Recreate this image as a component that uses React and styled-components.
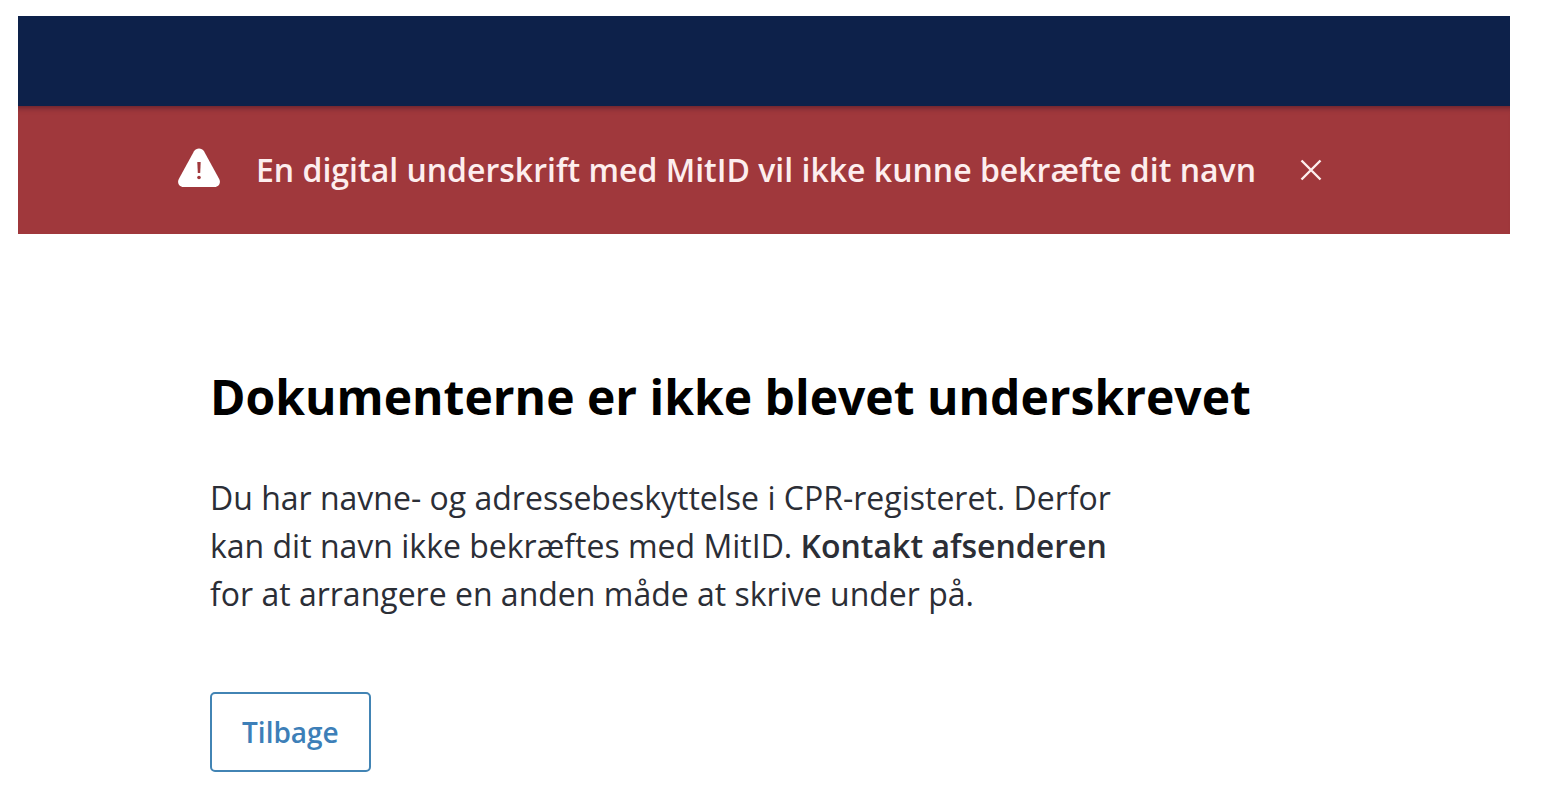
import React from "react";
import styled, { createGlobalStyle } from "styled-components";

const GlobalStyle = createGlobalStyle`
  *, *::before, *::after { box-sizing: border-box; }
  body {
    margin: 0;
    background: #fff;
    color: #2b2e36;
    font-family: "Open Sans", "Noto Sans", sans-serif;
  }
`;

const Page = styled.div`
  padding: 16px 50px 32px 18px;
`;

const TopBar = styled.header`
  height: 90px;
  background: #0d214a;
`;

const Alert = styled.div`
  display: flex;
  align-items: center;
  min-height: 128px;
  padding: 0 160px;
  background: #a0383c;
  color: #fff;
  box-shadow: inset 0 7px 6px -6px rgba(40, 10, 30, 0.6);
`;

const WarningIcon = styled.svg`
  flex: none;
  width: 42px;
  height: 40px;
  margin: 0 36px 4px 0;
`;

const AlertText = styled.p`
  margin: 0;
  font-size: 32px;
  line-height: 48px;
  font-weight: 600;
  color: #fdeeee;
`;

const CloseButton = styled.button`
  display: flex;
  margin: 0 0 0 40px;
  padding: 4px;
  border: 0;
  background: none;
  color: #fdeeee;
  cursor: pointer;
`;

const Content = styled.main`
  padding: 128px 192px 0;
`;

const Title = styled.h1`
  margin: 0;
  color: #000;
  font-size: 48px;
  line-height: 70px;
  font-weight: 700;
`;

const Message = styled.p`
  max-width: 920px;
  margin: 42px 0 74px;
  font-size: 32px;
  line-height: 48px;

  strong { font-weight: 600; }
`;

const BackButton = styled.button`
  height: 80px;
  padding: 0 30px;
  border: 2px solid #4284b4;
  border-radius: 5px;
  background: #fff;
  color: #3d7fb8;
  font: 600 28px/40px "Open Sans", sans-serif;
  cursor: pointer;
`;

export default function App() {
  return (
    <Page>
      <GlobalStyle />
      <TopBar />
      <Alert role="alert">
        <WarningIcon viewBox="0 0 42 40" aria-hidden="true">
          <path
            fill="#fff"
            d="M16 3.2C18.2-.3 23.8-.3 26 3.2L41.2 31C43.2 34.700 40.800 39 36.600 39H5.400C1.200 39-1.200 34.700.8 31Z"
          />
          <path fill="#a0383c" d="M19.300 14h3.400l-.5 11h-2.400Z" />
          <circle cx="21" cy="29.500" r="1.800" fill="#a0383c" />
        </WarningIcon>
        <AlertText>En digital underskrift med MitID vil ikke kunne bekræfte dit navn</AlertText>
        <CloseButton type="button" aria-label="Luk">
          <svg width="22" height="22" viewBox="0 0 22 22" aria-hidden="true">
            <path d="M1.500 1.500l19 19M20.500 1.500l-19 19" stroke="currentColor" strokeWidth="2.400" />
          </svg>
        </CloseButton>
      </Alert>
      <Content>
        <Title>Dokumenterne er ikke blevet underskrevet</Title>
        <Message>
          Du har navne- og adressebeskyttelse i CPR-registeret. Derfor kan dit navn ikke
          bekræftes med MitID. <strong>Kontakt afsenderen</strong> for at arrangere en anden
          måde at skrive under på.
        </Message>
        <BackButton type="button">Tilbage</BackButton>
      </Content>
    </Page>
  );
}
